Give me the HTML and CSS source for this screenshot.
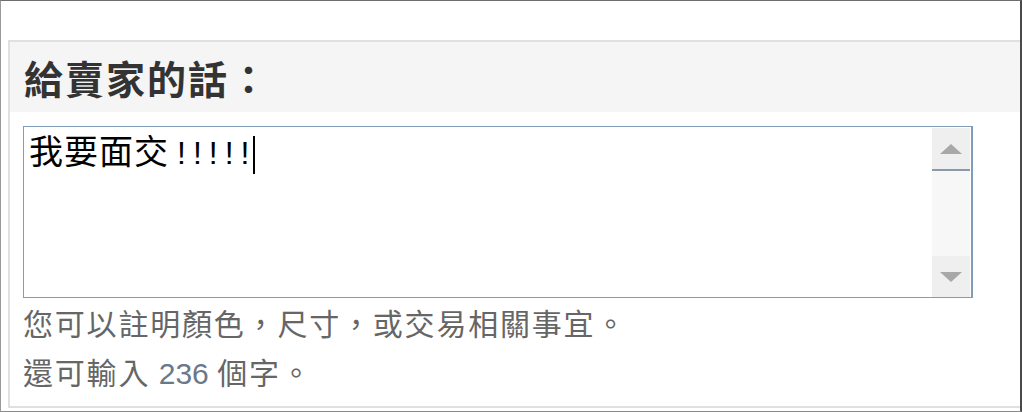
FILE: index.html
```html
<!DOCTYPE html>
<html lang="zh-Hant">
  <head>
    <meta charset="UTF-8" />
    <title>給賣家的話</title>
    <link rel="stylesheet" href="styles.css">
  </head>
  <body>
    <div class="frame">
      <div class="panel">
        <div class="panel-head">
          <h3>給賣家的話：</h3>
        </div>
        <div class="panel-body">
          <div class="note-box">
            <div class="note-text">我要面交<span class="bang">!!!!!</span><span class="caret"></span></div>
            <div class="scrollbar">
              <div class="sb-btn sb-up"><span class="arrow-up"></span></div>
              <div class="sb-track"></div>
              <div class="sb-btn sb-down"><span class="arrow-down"></span></div>
            </div>
          </div>
          <p class="hint">您可以註明顏色，尺寸，或交易相關事宜。</p>
          <p class="hint">還可輸入 <span class="count">236</span> 個字。</p>
        </div>
      </div>
    </div>
  </body>
</html>
```

FILE: styles.css
```css
body {
  margin: 0;
  font-family: "Noto Sans CJK TC", "Noto Sans", sans-serif;
  background-color: white;
}
.frame {
  width: 1022px;
  height: 412px;
  box-sizing: border-box;
  border: 1px solid #6d6d6d;
  border-left-color: #9a9a9a;
  border-right: 2px solid #4a4a4a;
  border-bottom-color: #8a8a8a;
  padding: 39px 0 0 7px;
  overflow: hidden;
}
.panel {
  height: 368px;
  box-sizing: border-box;
  border: 2px solid #e0e0e0;
  border-right: none;
}
.panel-head {
  height: 70px;
  background-color: #f5f5f5;
  display: flex;
  align-items: center;
  padding-left: 14px;
}
.panel-head h3 {
  margin: 0;
  font-size: 39px;
  font-weight: bold;
  letter-spacing: 2px;
  color: #333;
}
.panel-body {
  padding: 14px 0 0 13px;
}
.note-box {
  width: 950px;
  height: 172px;
  box-sizing: border-box;
  border: 1px solid #7f9db9;
  border-right-width: 2px;
  display: flex;
}
.note-text {
  flex: 1;
  padding: 2px 5px;
  font-size: 34px;
  line-height: 42px;
  letter-spacing: 1px;
  color: #000;
}
.bang {
  margin-left: 8px;
  letter-spacing: 7px;
  font-family: "Liberation Sans", sans-serif;
  font-size: 32px;
}
.caret {
  display: inline-block;
  width: 2px;
  height: 38px;
  margin-left: -3px;
  background-color: #000;
  vertical-align: -10px;
}
.scrollbar {
  width: 38px;
  margin: 1px 1px 0 0;
  display: flex;
  flex-direction: column;
  background-color: #f7f7f7;
}
.sb-btn {
  height: 41px;
  background-color: #efefef;
  display: flex;
  align-items: center;
  justify-content: center;
}
.sb-up {
  border-bottom: 2px solid #8a9aaa;
}
.sb-track {
  flex: 1;
}
.arrow-up {
  width: 0;
  height: 0;
  border-left: 11px solid transparent;
  border-right: 11px solid transparent;
  border-bottom: 10px solid #a8a8a8;
}
.arrow-down {
  width: 0;
  height: 0;
  border-left: 11px solid transparent;
  border-right: 11px solid transparent;
  border-top: 10px solid #a8a8a8;
}
.hint {
  margin: 0;
  font-size: 30px;
  line-height: 49px;
  letter-spacing: 1.8px;
  color: #666;
}
.count {
  font-family: "Liberation Sans", sans-serif;
  letter-spacing: 0;
  color: #6b7888;
}
```
